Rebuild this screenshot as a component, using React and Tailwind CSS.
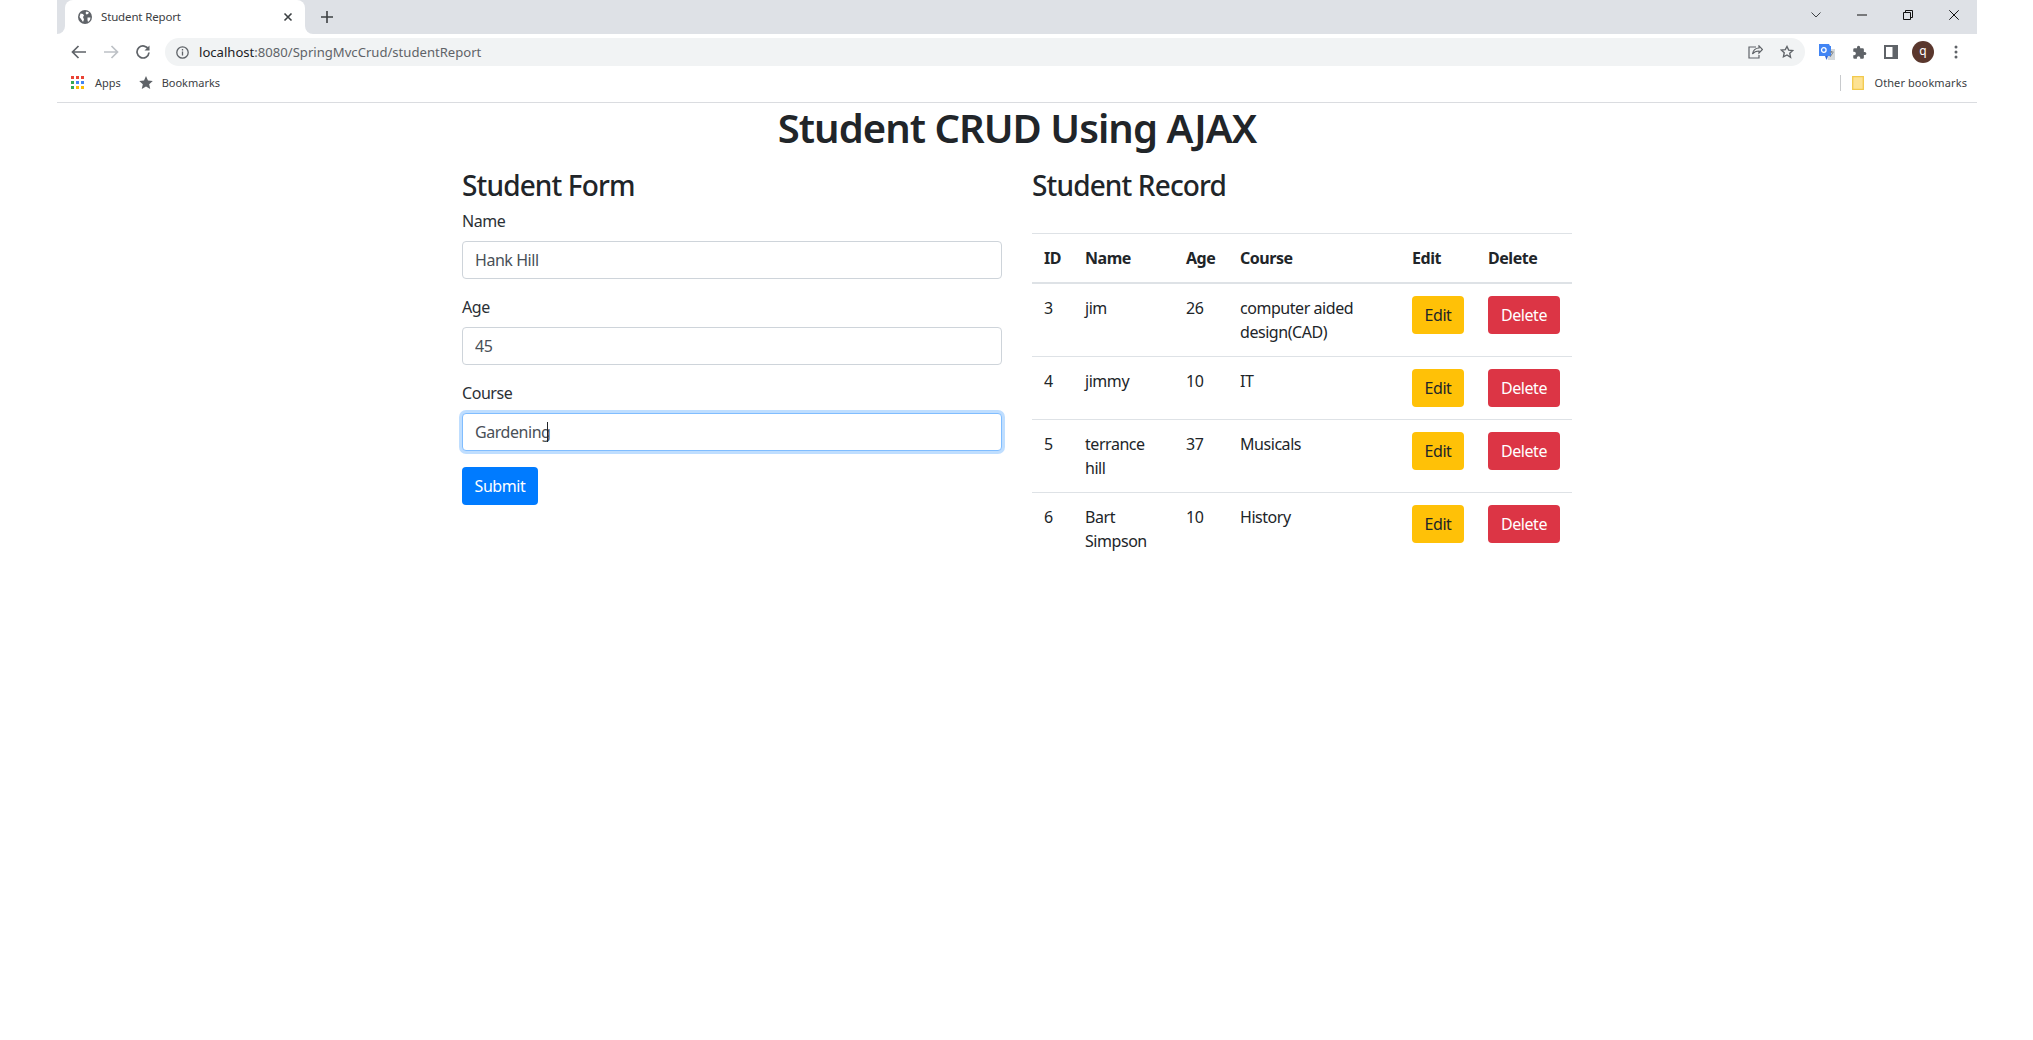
import React from "react";

const F = "font-['Noto_Sans','Open_Sans',sans-serif]";

const rows = [
  { id: 3, name: "jim", age: 26, course: "computer aided design(CAD)" },
  { id: 4, name: "jimmy", age: 10, course: "IT" },
  { id: 5, name: "terrance hill", age: 37, course: "Musicals" },
  { id: 6, name: "Bart Simpson", age: 10, course: "History" },
];

function Field({ label, value, focused }) {
  return (
    <div className="mb-4">
      <label className="block mb-2 text-base leading-6 tracking-[-0.45px] text-[#2b3035]">{label}</label>
      <div className="relative">
        <input
          readOnly
          value={value}
          className={
            "block w-full h-[38px] px-3 rounded text-base text-[#495057] bg-white border tracking-[-0.45px] outline-none " +
            (focused
              ? "border-[#80bdff] shadow-[0_0_0_3px_rgba(0,123,255,0.25)]"
              : "border-[#ced4da]")
          }
        />
        {focused && <span className="absolute left-[85px] top-[9px] w-px h-5 bg-[#212529]" />}
      </div>
    </div>
  );
}

const Gray = "#5f6368";

export default function App() {
  return (
    <div className={"w-[2033px] h-[1040px] bg-white overflow-hidden text-[#212529] " + F}>
      <div className="ml-[57px] w-[1920px]">
        {/* tab strip */}
        <div className="h-[34px] bg-[#dee1e6] flex items-end pl-2">
          <div className="relative w-[240px] h-[34px] bg-white rounded-t-lg flex items-center pl-[13px] pr-3">
            <span className="absolute -left-2 bottom-0 w-2 h-2 bg-white">
              <span className="block w-2 h-2 bg-[#dee1e6] rounded-br-lg" />
            </span>
            <span className="absolute -right-2 bottom-0 w-2 h-2 bg-white">
              <span className="block w-2 h-2 bg-[#dee1e6] rounded-bl-lg" />
            </span>
            <svg width="14" height="14" viewBox="0 0 14 14">
              <circle cx="7" cy="7" r="7" fill={Gray} />
              <path d="M2.500 3.500l2.500.5 1 1.500-1 1.500L6 9.500l-1 2.500L3 9 1.500 7zM8.500 1.500l2.500 1-1 1.500-1.500.5-1-1.500zM9.500 7.500l3 0-.5 2.500-2 2-.5-2z" fill="#fff" />
            </svg>
            <span className="ml-[9px] text-[11.5px] leading-none text-[#3c4043] tracking-[-0.15px] whitespace-nowrap">Student Report</span>
            <svg className="ml-auto mr-0" width="10" height="10" viewBox="0 0 10 10" strokeWidth="1.600" fill="none">
              <path d="M1.500 1.500l7 7M8.500 1.500l-7 7" stroke="#3c4043" />
            </svg>
          </div>
          <svg className="ml-4 mb-[11px]" width="12" height="12" viewBox="0 0 12 12" fill="none" stroke="#3c4043" strokeWidth="1.600">
            <path d="M6 0v12M0 6h12" />
          </svg>
          <div className="ml-auto mb-[14px] flex items-center">
            <svg width="10" height="6" viewBox="0 0 10 6" fill="none" stroke="#3c4043" strokeWidth="1"><path d="M.5.5L5 5 9.500.5" /></svg>
            <svg className="ml-9" width="10" height="2" viewBox="0 0 10 2" stroke="#111"><path d="M0 1h10" /></svg>
            <svg className="ml-9" width="10" height="10" viewBox="0 0 10 10" fill="none" stroke="#111"><path d="M.5 2.500h7v7h-7zM2.500 2.500V.5h7v7H7.500" /></svg>
            <svg className="ml-9 mr-[18px]" width="10" height="10" viewBox="0 0 10 10" fill="none" stroke="#111"><path d="M.3.3l9.400 9.400M9.700.3L.3 9.700" /></svg>
          </div>
        </div>

        {/* toolbar */}
        <div className="h-[36px] bg-white flex items-center">
          <svg className="ml-[14px]" width="15" height="14" viewBox="0 0 15 14" fill="none" stroke={Gray} strokeWidth="1.700"><path d="M15 7H1.500M7.500 1L1.500 7l6 6" /></svg>
          <svg className="ml-[18px]" width="15" height="14" viewBox="0 0 15 14" fill="none" stroke="#bdc1c6" strokeWidth="1.700"><path d="M0 7h13.500M7.500 1l6 6-6 6" /></svg>
          <svg className="ml-[17px]" width="14" height="14" viewBox="0 0 14 14" fill="none" stroke={Gray} strokeWidth="1.700">
            <path d="M12.500 4.500A6 6 0 1 0 13 7.500" />
            <path d="M13.500 0.500v5h-5z" fill={Gray} stroke="none" />
          </svg>
          <div className="ml-[15px] w-[1640px] h-7 rounded-full bg-[#f1f3f4] flex items-center pl-[11px]">
            <svg width="13" height="13" viewBox="0 0 13 13" fill="none" stroke={Gray} strokeWidth="1.300">
              <circle cx="6.500" cy="6.500" r="5.700" /><path d="M6.500 5.500v4M6.500 3v1.500" />
            </svg>
            <span className="ml-[10px] pt-px text-[13.100px] leading-none whitespace-nowrap text-[#5f6368]">
              <span className="text-[#202124]">localhost</span>:8080/SpringMvcCrud/studentReport
            </span>
            <svg className="ml-auto" width="15" height="14" viewBox="0 0 15 14" fill="none" stroke={Gray} strokeWidth="1.200">
              <path d="M11 .8l3.500 3.700L11 8V6C8 6 6 7 4.500 9 5 6 7 3 11 3zM8 2H1v11h10v-3" />
            </svg>
            <svg className="ml-[17px] mr-[11px]" width="14" height="14" viewBox="0 0 24 24" fill="none" stroke={Gray} strokeWidth="2.300">
              <path d="M12 2.500l2.900 6.300 6.900.8-5.100 4.700 1.400 6.800L12 17l-6.100 3.100 1.400-6.800-5.100-4.700 6.900-.8z" />
            </svg>
          </div>
          <svg className="ml-[14px]" width="16" height="17" viewBox="0 0 16 17">
            <path d="M7 5h9v11H9z" fill="#d5d9dc" />
            <path d="M0 0h10l1 2h1v10H0z" fill="#4285f4" />
            <path d="M10.500 8h4M12.500 7v1.500M11 13l3-4.500" stroke="#80868b" strokeWidth="1" fill="none" />
            <circle cx="4.800" cy="6" r="2.300" fill="none" stroke="#fff" strokeWidth="1.300" />
            <path d="M6 12l1.500 4L9 12z" fill="#3367d6" />
          </svg>
          <svg className="ml-[17px]" width="15" height="15" viewBox="0 0 24 24" fill={Gray}>
            <path d="M20.500 11H19V7a2 2 0 0 0-2-2h-4V3.500a2.500 2.500 0 0 0-5 0V5H4a2 2 0 0 0-2 2v3.800h1.500a2.700 2.700 0 0 1 0 5.400H2V20a2 2 0 0 0 2 2h3.800v-1.500a2.700 2.700 0 0 1 5.400 0V22H17a2 2 0 0 0 2-2v-4h1.500a2.500 2.500 0 0 0 0-5z" />
          </svg>
          <svg className="ml-[17px]" width="14" height="14" viewBox="0 0 14 14">
            <path d="M0 0h14v14H0z" fill={Gray} /><path d="M2 2h6.500v10H2z" fill="#fff" />
          </svg>
          <div className="ml-[14px] w-[22px] h-[22px] rounded-full bg-[#5a372d] text-white text-[12px] leading-none flex items-center justify-center pb-0.5">q</div>
          <svg className="ml-[20px]" width="4" height="14" viewBox="0 0 4 14" fill={Gray}>
            <circle cx="2" cy="2" r="1.500" /><circle cx="2" cy="7" r="1.500" /><circle cx="2" cy="12" r="1.500" />
          </svg>
        </div>

        {/* bookmarks bar */}
        <div className="h-[33px] pb-[7px] border-b border-[#dadce0] flex items-center text-[11px] leading-none text-[#3c4043]">
          <svg className="ml-[14px]" width="14" height="13" viewBox="0 0 14 13">
            {[0, 5, 10].map((y, r) =>
              [0, 5, 10].map((x, c) => (
                <rect key={x + "-" + y} x={x} y={y} width="3" height="3"
                  fill={[["#ea4335", "#ea4335", "#ea4335"], ["#34a853", "#4285f4", "#4285f4"], ["#34a853", "#fbbc04", "#fbbc04"]][r][c]} />
              ))
            )}
          </svg>
          <span className="ml-[10px] tracking-[-0.05px]">Apps</span>
          <svg className="ml-[18px]" width="14" height="13" viewBox="0 0 24 23" fill={Gray}>
            <path d="M12 0l3.500 8 8.500.8-6.400 5.700 1.900 8.500L12 18.500 4.500 23l1.900-8.500L0 8.800 8.500 8z" />
          </svg>
          <span className="ml-[9px]">Bookmarks</span>
          <span className="ml-auto w-px h-4 bg-[#c8cacd]" />
          <svg className="ml-[11px]" width="12" height="14" viewBox="0 0 12 14">
            <path d="M.7.7h10.600v12.600H.700z" fill="#fde293" stroke="#f2c94c" strokeWidth="1.300" />
          </svg>
          <span className="ml-[10px] mr-[10px] tracking-[0.1px]">Other bookmarks</span>
        </div>

        {/* page */}
        <h1 className="pt-px text-[40px] leading-[48px] font-semibold text-center m-0 tracking-[-0.97px]">Student CRUD Using AJAX</h1>
        <div className="w-[1110px] mx-auto mt-[15px] flex gap-[30px]">
          <div className="w-[540px]">
            <h3 className="text-[28px] leading-[36px] font-medium mb-[6px] tracking-[-0.85px]">Student Form</h3>
            <Field label="Name" value="Hank Hill" />
            <Field label="Age" value="45" />
            <Field label="Course" value="Gardening" focused />
            <button className="block w-[76px] h-[38px] rounded bg-[#007bff] text-white text-base tracking-[-0.4px]">Submit</button>
          </div>
          <div className="w-[540px]">
            <h3 className="text-[28px] leading-[36px] font-medium mb-[30px] tracking-[-0.85px]">Student Record</h3>
            <table className="w-[540px] table-fixed border-collapse text-base leading-6 tracking-[-0.45px]">
              <colgroup>
                <col className="w-[41px]" />
                <col className="w-[101px]" />
                <col className="w-[54px]" />
                <col className="w-[172px]" />
                <col className="w-[76px]" />
                <col className="w-[96px]" />
              </colgroup>
              <thead>
                <tr className="border-t border-[#dee2e6]">
                  {["ID", "Name", "Age", "Course", "Edit", "Delete"].map((h) => (
                    <th key={h} className="p-3 text-left font-bold border-b-2 border-[#dee2e6] align-bottom">{h}</th>
                  ))}
                </tr>
              </thead>
              <tbody>
                {rows.map((r) => (
                  <tr key={r.id} className="border-t border-[#dee2e6] first:border-t-0">
                    <td className="p-3 align-top">{r.id}</td>
                    <td className="p-3 align-top">{r.name}</td>
                    <td className="p-3 align-top">{r.age}</td>
                    <td className="p-3 align-top">{r.course}</td>
                    <td className="p-3 align-top">
                      <button className="block w-[52px] h-[38px] rounded bg-[#ffc107] text-[#212529]">Edit</button>
                    </td>
                    <td className="p-3 align-top">
                      <button className="block w-[72px] h-[38px] rounded bg-[#dc3545] text-white">Delete</button>
                    </td>
                  </tr>
                ))}
              </tbody>
            </table>
          </div>
        </div>
      </div>
    </div>
  );
}
